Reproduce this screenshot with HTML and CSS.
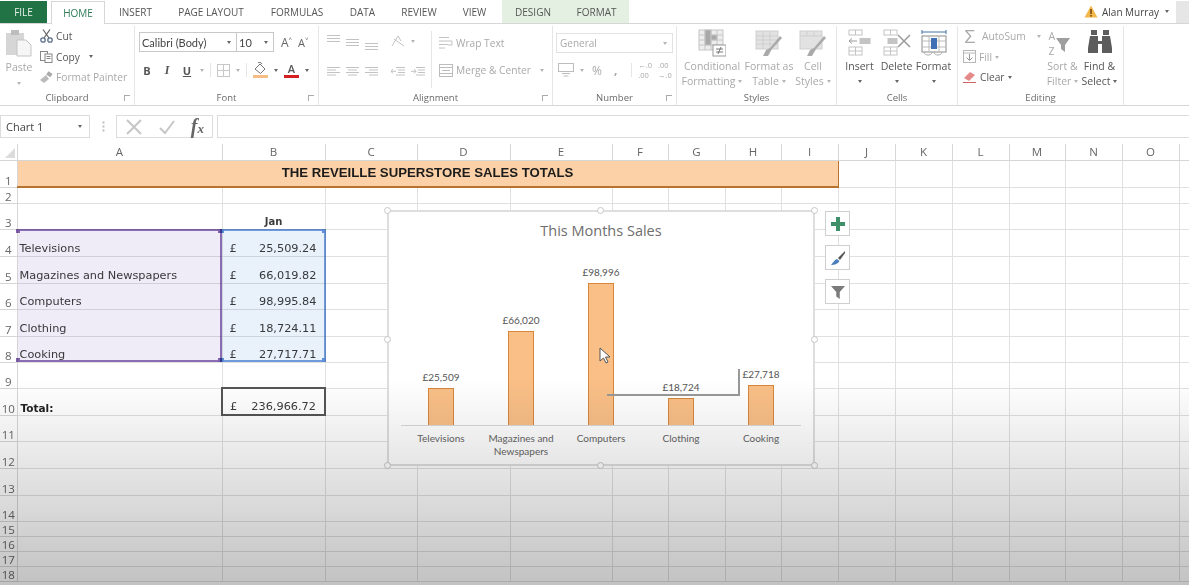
FILE: index.html
```html
<!DOCTYPE html>
<html lang="en">
<head>
    <meta charset="UTF-8">
    <title>Sales Totals - Excel</title>
    <link rel="stylesheet" href="styles.css">
</head>
<body>
<div class="app">
    <div class="tabs">
        <div class="tab file">FILE</div>
        <div class="tab home">HOME</div>
        <div class="tab w-insert">INSERT</div>
        <div class="tab w-layout">PAGE LAYOUT</div>
        <div class="tab w-formulas">FORMULAS</div>
        <div class="tab w-data">DATA</div>
        <div class="tab w-review">REVIEW</div>
        <div class="tab w-view">VIEW</div>
        <div class="chart-tabs">
            <div class="tab w-design">DESIGN</div>
            <div class="tab w-format">FORMAT</div>
        </div>
        <div class="user">
            <svg width="14" height="13" viewBox="0 0 14 13"><path d="M7 0.5 L13.5 12.5 H0.5 Z" fill="#f2b84b"/><rect x="6.2" y="4" width="1.6" height="5" fill="#7a4a10"/><rect x="6.2" y="10" width="1.6" height="1.6" fill="#7a4a10"/></svg>
            <span class="user-name">Alan Murray</span>
            <span class="caret dark"></span>
            <div class="avatar"></div>
        </div>
    </div>

    <div class="ribbon">
        <section class="group g-clipboard">
            <div class="group-body">
                <div class="big paste">
                    <svg width="28" height="28" viewBox="0 0 28 28"><rect x="1" y="4" width="18" height="22" fill="#d6d6d6"/><rect x="6" y="1" width="8" height="5" fill="#bdbdbd"/><path d="M12 11 H21 L26 16 V27 H12 Z" fill="#f6f6f6" stroke="#c4c4c4"/></svg>
                    <span class="off">Paste</span>
                    <span class="caret"></span>
                </div>
                <div class="stack">
                    <div class="small">
                        <svg width="13" height="14" viewBox="0 0 13 14" fill="none" stroke="#5a6f8c" stroke-width="1.3"><path d="M3 0.5 L9 9 M10 0.5 L4 9" stroke="#666"/><circle cx="3" cy="11" r="2.2"/><circle cx="10" cy="11" r="2.2"/></svg>
                        <span>Cut</span>
                    </div>
                    <div class="small">
                        <svg width="13" height="12" viewBox="0 0 13 12" fill="#fff" stroke="#888"><rect x="0.5" y="0.5" width="7" height="9"/><rect x="5" y="3" width="7" height="8.5"/><path d="M6.5 5.5 H10.5 M6.5 7.5 H10.5" /></svg>
                        <span>Copy</span>
                        <span class="caret dark gap"></span>
                    </div>
                    <div class="small off">
                        <svg width="13" height="12" viewBox="0 0 13 12"><path d="M0 9 L6 4 L9 8 L4 12 Z" fill="#bbb"/><rect x="7" y="1" width="5" height="4" transform="rotate(35 9 3)" fill="#aaa"/></svg>
                        <span>Format Painter</span>
                    </div>
                </div>
            </div>
            <div class="group-label">Clipboard<i class="launch"></i></div>
        </section>

        <section class="group g-font">
            <div class="group-body column">
                <div class="row">
                    <div class="combo font-name">Calibri (Body)<span class="caret dark"></span></div>
                    <div class="combo font-size">10<span class="caret dark"></span></div>
                    <span class="grow">A<sup>&#708;</sup></span>
                    <span class="shrink">A<sup>&#709;</sup></span>
                </div>
                <div class="row fmt">
                    <b class="fmt-b">B</b>
                    <i class="fmt-i">I</i>
                    <u class="fmt-u">U</u>
                    <span class="caret"></span>
                    <span class="tick"></span>
                    <svg width="13" height="13" viewBox="0 0 13 13" fill="none" stroke="#c8c8c8"><rect x="0.5" y="0.5" width="12" height="12"/><path d="M6.5 0 V13 M0 6.5 H13"/></svg>
                    <span class="caret"></span>
                    <span class="tick"></span>
                    <svg width="15" height="16" viewBox="0 0 15 16"><path d="M2 7 L7 2 L12 7 L7.500 11.500 Z" fill="#fff" stroke="#777"/><path d="M5 1 C6 0 8 0 9 2" fill="none" stroke="#777"/><rect x="0" y="13" width="15" height="3" fill="#f6bd85"/></svg>
                    <span class="caret dark"></span>
                    <span class="font-color">A</span>
                    <span class="caret dark"></span>
                </div>
            </div>
            <div class="group-label">Font<i class="launch"></i></div>
        </section>

        <section class="group g-align">
            <div class="group-body">
                <div class="column">
                    <div class="row align-icons top-icons">
                        <svg class="lines" width="13" height="8" viewBox="0 0 13 8"><path d="M0 .5H13M0 3.5H13M0 6.5H13"/></svg>
                        <svg class="lines lines-mid" width="13" height="8" viewBox="0 0 13 8"><path d="M0 .5H13M0 3.5H13M0 6.5H13"/></svg>
                        <svg class="lines lines-low" width="13" height="8" viewBox="0 0 13 8"><path d="M0 .5H13M0 3.5H13M0 6.5H13"/></svg>
                        <svg class="lines orient" width="14" height="12" viewBox="0 0 14 12"><path d="M1 11 L7 1 L10 6 M3 4 L13 11"/></svg>
                        <span class="caret orient-caret"></span>
                    </div>
                    <div class="row align-icons">
                        <svg class="lines" width="13" height="9" viewBox="0 0 13 9"><path d="M0 .5H13M0 3H9M0 5.5H13M0 8H9"/></svg>
                        <svg class="lines" width="13" height="9" viewBox="0 0 13 9"><path d="M0 .5H13M2 3H11M0 5.5H13M2 8H11"/></svg>
                        <svg class="lines" width="13" height="9" viewBox="0 0 13 9"><path d="M0 .5H13M4 3H13M0 5.5H13M4 8H13"/></svg>
                        <svg class="lines orient" width="14" height="9" viewBox="0 0 14 9"><path d="M5 .5H14M7 3H14M7 5.5H14M5 8H14M0 4.3H5M2 2L0 4.3L2 6.5"/></svg>
                        <svg class="lines" width="14" height="9" viewBox="0 0 14 9"><path d="M5 .5H14M7 3H14M7 5.5H14M5 8H14M0 4.3H5M3 2L5 4.3L3 6.5"/></svg>
                    </div>
                </div>
                <div class="stack wide">
                    <div class="small off">
                        <svg width="14" height="13" viewBox="0 0 14 13" class="lines"><path d="M0 .5H10M0 4H13M0 7.5H9M0 11H6M13 4V8H9"/></svg>
                        <span>Wrap Text</span>
                    </div>
                    <div class="small off">
                        <svg width="14" height="13" viewBox="0 0 14 13" fill="none" stroke="#bcbcbc"><rect x="0.5" y="0.5" width="13" height="12"/><path d="M0 3.5H14M0 9.5H14M3 6.5H11"/></svg>
                        <span>Merge &amp; Center</span>
                        <span class="caret merge-caret"></span>
                    </div>
                </div>
            </div>
            <div class="group-label">Alignment<i class="launch"></i></div>
        </section>

        <section class="group g-number">
            <div class="group-body column">
                <div class="row">
                    <div class="combo general off">General<span class="caret"></span></div>
                </div>
                <div class="row fmt-num">
                    <svg width="16" height="14" viewBox="0 0 16 14" fill="none" stroke="#bdbdbd"><rect x="0.5" y="0.5" width="15" height="8"/><path d="M4 10.5H12M5.5 13H10.5"/></svg>
                    <span class="caret"></span>
                    <span class="percent">%</span>
                    <span class="comma">,</span>
                    <span class="tick"></span>
                    <span class="decimals">&#8592;.0<br>.00</span>
                    <span class="decimals">.00<br>&#8594;.0</span>
                </div>
            </div>
            <div class="group-label">Number<i class="launch"></i></div>
        </section>

        <section class="group g-styles">
            <div class="group-body">
                <div class="big style off w-cond">
                    <svg width="28" height="28" viewBox="0 0 28 28" fill="none" stroke="#c6c6c6"><rect x="1" y="1" width="24" height="20" fill="#ededed"/><path d="M7 1V21M13 1V21M19 1V21M1 6H25M1 11H25M1 16H25"/><rect x="7" y="1" width="6" height="15" fill="#a8a8a8"/><rect x="13" y="6" width="6" height="5" fill="#a8a8a8"/><rect x="15" y="16" width="13" height="11" fill="#fff" stroke="#999"/><path d="M18 20H25M18 23H25M23 18L20 25" stroke="#777"/></svg>
                    <span>Conditional</span>
                    <span>Formatting<i class="caret inline"></i></span>
                </div>
                <div class="big style off w-table">
                    <svg width="28" height="28" viewBox="0 0 28 28" fill="none" stroke="#cfcfcf"><rect x="1" y="2" width="22" height="18" fill="#e2e2e2"/><path d="M1 7H23M1 11H23M1 15H23M8 2V20M15 2V20"/><path d="M27 9 L17 20 L13 27 L8 27 L11 21 L15 19 L25 7 Z" fill="#aaa" stroke="none"/></svg>
                    <span>Format as</span>
                    <span>Table<i class="caret inline"></i></span>
                </div>
                <div class="big style off w-cell">
                    <svg width="28" height="28" viewBox="0 0 28 28" fill="none" stroke="#cfcfcf"><rect x="1" y="2" width="22" height="18" fill="#e2e2e2"/><path d="M1 7H23M8 2V7M15 2V7"/><path d="M27 9 L17 20 L13 27 L8 27 L11 21 L15 19 L25 7 Z" fill="#aaa" stroke="none"/></svg>
                    <span>Cell</span>
                    <span>Styles<i class="caret inline"></i></span>
                </div>
            </div>
            <div class="group-label">Styles</div>
        </section>

        <section class="group g-cells">
            <div class="group-body">
                <div class="big cell-btn">
                    <svg width="24" height="28" viewBox="0 0 24 28" fill="none" stroke="#c4c4c4"><rect x="1" y="1" width="13" height="5"/><path d="M7.500 1V6"/><rect x="1" y="18" width="13" height="8"/><path d="M7.500 18V26M1 22H14"/><rect x="12" y="9.500" width="10" height="5" fill="#c4c4c4"/><path d="M1 12H9M4 9.500L1 12L4 14.500" stroke="#999"/></svg>
                    <span>Insert</span>
                    <span class="caret dark"></span>
                </div>
                <div class="big cell-btn">
                    <svg width="28" height="28" viewBox="0 0 28 28" fill="none" stroke="#c4c4c4"><rect x="1" y="1" width="13" height="5"/><path d="M7.500 1V6"/><rect x="1" y="18" width="13" height="8"/><path d="M7.500 18V26M1 22H14"/><rect x="5" y="9.500" width="9" height="5" fill="#c4c4c4"/><path d="M15 6L27 18M27 6L15 18" stroke="#9a9a9a" stroke-width="1.500"/></svg>
                    <span>Delete</span>
                    <span class="caret dark"></span>
                </div>
                <div class="big cell-btn">
                    <svg width="28" height="28" viewBox="0 0 28 28" fill="none" stroke="#8a8a8a"><path d="M2 3H26M2 1V5M26 1V5" stroke="#4472a8"/><rect x="2" y="7" width="24" height="16"/><path d="M9 7V23M19 7V23M2 12H26M2 18H26" stroke="#bbb"/><rect x="11" y="9" width="6" height="11" fill="#3f70b5" stroke="none"/><path d="M4 23 C4 27 12 27 12 23 M14 23 C14 27 22 27 22 23" stroke="#aaa"/></svg>
                    <span>Format</span>
                    <span class="caret dark"></span>
                </div>
            </div>
            <div class="group-label">Cells</div>
        </section>

        <section class="group g-editing">
            <div class="group-body">
                <div class="stack edit-stack">
                    <div class="small off">
                        <span class="sigma">&#931;</span>
                        <span>AutoSum</span>
                        <span class="caret gap-wide"></span>
                    </div>
                    <div class="small off">
                        <svg width="13" height="13" viewBox="0 0 13 13" fill="none" stroke="#b8b8b8"><rect x="0.500" y="0.500" width="12" height="12"/><path d="M0 3H13"/><path d="M6.500 4V10M3.500 7.500L6.500 10.500L9.500 7.500" stroke="#999"/></svg>
                        <span>Fill<i class="caret inline"></i></span>
                    </div>
                    <div class="small">
                        <svg width="14" height="12" viewBox="0 0 14 12"><path d="M1 7 L7 1 L12 4 L6 10 Z" fill="#e58a8a"/><path d="M0 11.500H13" stroke="#c66" stroke-width="1"/></svg>
                        <span>Clear<i class="caret inline dark"></i></span>
                    </div>
                </div>
                <div class="big edit-btn off">
                    <div class="sort-icon">
                        <div class="az"><span>A</span><span>Z</span></div>
                        <svg width="14" height="15" viewBox="0 0 14 15"><path d="M0 0H14L9 7V14L5 11V7Z" fill="#9e9e9e"/></svg>
                    </div>
                    <span>Sort &amp;</span>
                    <span>Filter<i class="caret inline"></i></span>
                </div>
                <div class="big edit-btn">
                    <svg width="26" height="28" viewBox="0 0 26 28" fill="#5d5d5d"><rect x="4" y="1" width="6" height="5"/><rect x="16" y="1" width="6" height="5"/><path d="M3 7H11V12H15V7H23L25 19V24H15V15H11V24H1V19Z"/></svg>
                    <span>Find &amp;</span>
                    <span>Select<i class="caret inline dark"></i></span>
                </div>
            </div>
            <div class="group-label">Editing</div>
        </section>
    </div>

    <div class="formula-bar">
        <div class="name-box">Chart 1<span class="caret dark"></span></div>
        <div class="grip"></div>
        <div class="fx-buttons">
            <svg width="18" height="18" viewBox="0 0 18 18" fill="none" stroke="#c6c6c6" stroke-width="2"><path d="M2 2L16 16M16 2L2 16"/></svg>
            <svg width="18" height="18" viewBox="0 0 18 18" fill="none" stroke="#c6c6c6" stroke-width="2"><path d="M2 10L7 15L16 3"/></svg>
            <span class="fx">f<small>x</small></span>
        </div>
        <div class="formula-input"></div>
    </div>

    <div class="sheet">
        <table class="grid">
            <colgroup>
                <col class="c-head"><col class="c-a"><col class="c-b"><col class="c-c"><col class="c-d"><col class="c-e">
                <col class="c-f"><col class="c-g"><col class="c-f"><col class="c-g"><col class="c-g"><col class="c-g">
                <col class="c-g"><col class="c-f"><col class="c-g"><col class="c-g"><col class="c-p">
            </colgroup>
            <thead>
                <tr class="h17"><th class="corner"><span></span></th><th>A</th><th>B</th><th>C</th><th>D</th><th>E</th><th>F</th><th>G</th><th>H</th><th>I</th><th>J</th><th>K</th><th>L</th><th>M</th><th>N</th><th>O</th><th></th></tr>
            </thead>
            <tbody>
                <tr class="h27"><th>1</th><td colspan="9" class="banner">THE REVEILLE SUPERSTORE SALES TOTALS</td><td></td><td></td><td></td><td></td><td></td><td></td><td></td></tr>
                <tr class="h16"><th>2</th><td></td><td></td><td></td><td></td><td></td><td></td><td></td><td></td><td></td><td></td><td></td><td></td><td></td><td></td><td></td><td></td></tr>
                <tr class="h26"><th>3</th><td></td><td class="month">Jan</td><td></td><td></td><td></td><td></td><td></td><td></td><td></td><td></td><td></td><td></td><td></td><td></td><td></td><td></td></tr>
                <tr class="h27"><th>4</th><td class="label">Televisions</td><td class="num"><div><span>£</span><span>25,509.24</span></div></td><td></td><td></td><td></td><td></td><td></td><td></td><td></td><td></td><td></td><td></td><td></td><td></td><td></td><td></td></tr>
                <tr class="h27"><th>5</th><td class="label">Magazines and Newspapers</td><td class="num"><div><span>£</span><span>66,019.82</span></div></td><td></td><td></td><td></td><td></td><td></td><td></td><td></td><td></td><td></td><td></td><td></td><td></td><td></td><td></td></tr>
                <tr class="h26"><th>6</th><td class="label">Computers</td><td class="num"><div><span>£</span><span>98,995.84</span></div></td><td></td><td></td><td></td><td></td><td></td><td></td><td></td><td></td><td></td><td></td><td></td><td></td><td></td><td></td></tr>
                <tr class="h27"><th>7</th><td class="label">Clothing</td><td class="num"><div><span>£</span><span>18,724.11</span></div></td><td></td><td></td><td></td><td></td><td></td><td></td><td></td><td></td><td></td><td></td><td></td><td></td><td></td><td></td></tr>
                <tr class="h26"><th>8</th><td class="label">Cooking</td><td class="num"><div><span>£</span><span>27,717.71</span></div></td><td></td><td></td><td></td><td></td><td></td><td></td><td></td><td></td><td></td><td></td><td></td><td></td><td></td><td></td></tr>
                <tr class="h26"><th>9</th><td></td><td></td><td></td><td></td><td></td><td></td><td></td><td></td><td></td><td></td><td></td><td></td><td></td><td></td><td></td><td></td></tr>
                <tr class="h27"><th>10</th><td class="label total">Total:</td><td class="num total-box"><div><span>£</span><span>236,966.72</span></div></td><td></td><td></td><td></td><td></td><td></td><td></td><td></td><td></td><td></td><td></td><td></td><td></td><td></td><td></td></tr>
                <tr class="h26"><th>11</th><td></td><td></td><td></td><td></td><td></td><td></td><td></td><td></td><td></td><td></td><td></td><td></td><td></td><td></td><td></td><td></td></tr>
                <tr class="h27"><th>12</th><td></td><td></td><td></td><td></td><td></td><td></td><td></td><td></td><td></td><td></td><td></td><td></td><td></td><td></td><td></td><td></td></tr>
                <tr class="h27"><th>13</th><td></td><td></td><td></td><td></td><td></td><td></td><td></td><td></td><td></td><td></td><td></td><td></td><td></td><td></td><td></td><td></td></tr>
                <tr class="h26"><th>14</th><td></td><td></td><td></td><td></td><td></td><td></td><td></td><td></td><td></td><td></td><td></td><td></td><td></td><td></td><td></td><td></td></tr>
                <tr class="h15"><th>15</th><td></td><td></td><td></td><td></td><td></td><td></td><td></td><td></td><td></td><td></td><td></td><td></td><td></td><td></td><td></td><td></td></tr>
                <tr class="h15"><th>16</th><td></td><td></td><td></td><td></td><td></td><td></td><td></td><td></td><td></td><td></td><td></td><td></td><td></td><td></td><td></td><td></td></tr>
                <tr class="h15"><th>17</th><td></td><td></td><td></td><td></td><td></td><td></td><td></td><td></td><td></td><td></td><td></td><td></td><td></td><td></td><td></td><td></td></tr>
                <tr class="h15"><th>18</th><td></td><td></td><td></td><td></td><td></td><td></td><td></td><td></td><td></td><td></td><td></td><td></td><td></td><td></td><td></td><td></td></tr>
            </tbody>
        </table>

        <!-- ranges highlighted by the selected chart -->
        <div class="range range-names"><i class="tl"></i><i class="tr"></i><i class="bl"></i><i class="br"></i></div>
        <div class="range range-values"><i class="tl"></i><i class="tr"></i><i class="bl"></i><i class="br"></i></div>

        <div class="chart">
            <i class="handle h-tl"></i><i class="handle h-tc"></i><i class="handle h-tr"></i>
            <i class="handle h-ml"></i><i class="handle h-mr"></i>
            <i class="handle h-bl"></i><i class="handle h-bc"></i><i class="handle h-br"></i>
            <div class="chart-title">This Months Sales</div>
            <div class="plot">
                <div class="bar-col"><span>£25,509</span><div class="bar" style="height:37px"></div></div>
                <div class="bar-col"><span>£66,020</span><div class="bar" style="height:94px"></div></div>
                <div class="bar-col"><span>£98,996</span><div class="bar" style="height:142px"></div></div>
                <div class="bar-col"><span>£18,724</span><div class="bar" style="height:27px"></div></div>
                <div class="bar-col"><span>£27,718</span><div class="bar" style="height:40px"></div></div>
            </div>
            <div class="cats">
                <div>Televisions</div>
                <div>Magazines and Newspapers</div>
                <div>Computers</div>
                <div>Clothing</div>
                <div>Cooking</div>
            </div>
            <div class="leader"></div>
            <svg class="pointer" width="12" height="17" viewBox="0 0 12 17"><path d="M1 1V14L4.500 11L7 16L9 15L6.500 10H11Z" fill="#fff" stroke="#555"/></svg>
        </div>

        <div class="chart-tools">
            <div class="tool"><svg width="14" height="14" viewBox="0 0 14 14"><path d="M5 0H9V5H14V9H9V14H5V9H0V5H5Z" fill="#3f8f6b"/></svg></div>
            <div class="tool"><svg width="16" height="16" viewBox="0 0 16 16"><path d="M15 1L8 8L10 10L15 3Z" fill="#555"/><path d="M7 9L9.500 11C8 14 4 15 1 15C3 13 4 10 7 9Z" fill="#4a7ebb"/></svg></div>
            <div class="tool"><svg width="14" height="14" viewBox="0 0 16 16"><path d="M0 1H16L10 8V16L6 13V8Z" fill="#7b7b7b"/></svg></div>
        </div>

        <div class="shade"></div>
    </div>
</div>
</body>
</html>
```

FILE: styles.css
```css
html, body {
    margin: 0;
    padding: 0;
    height: 100%;
    overflow: hidden;
    background: #fff;
}
.app {
    width: 1189px;
    height: 585px;
    overflow: hidden;
    font-family: "Open Sans", sans-serif;
    font-size: 10.2px;
    color: #555;
}
svg {
    flex-shrink: 0;
}

/* tabs */
.tabs {
    display: flex;
    align-items: stretch;
    height: 23px;
    border-bottom: 1px solid #d6d6d6;
    box-sizing: content-box;
}
.tab {
    display: flex;
    align-items: center;
    justify-content: center;
    font-size: 10px;
    color: #555;
}
.tab.file {
    width: 47px;
    margin-top: 1px;
    background: #217346;
    color: #e8f2ec;
}
.tab.home {
    width: 54px;
    margin-left: 4px;
    margin-top: 1px;
    margin-bottom: -1px;
    background: #fff;
    border: 1px solid #d6d6d6;
    border-bottom: none;
    color: #2c7a55;
    box-sizing: border-box;
}
.w-insert { width: 61px; }
.w-layout { width: 90px; }
.w-formulas { width: 82px; }
.w-data { width: 49px; }
.w-review { width: 64px; }
.w-view { width: 51px; padding-right: 4px; box-sizing: border-box; }
.chart-tabs {
    display: flex;
    background: #e4f0e2;
}
.w-design { width: 62px; }
.w-format { width: 65px; }
.user {
    display: flex;
    align-items: center;
    margin-left: auto;
    font-size: 10px;
}
.user-name {
    margin-left: 4px;
    margin-right: 6px;
    color: #444;
}
.avatar {
    width: 13px;
    height: 22px;
    margin-left: 7px;
    background: #e6e6e6;
}
.caret {
    display: inline-block;
    flex-shrink: 0;
    width: 0;
    height: 0;
    border-left: 2.5px solid transparent;
    border-right: 2.5px solid transparent;
    border-top: 3px solid #b5b5b5;
}
.caret.dark {
    border-top-color: #666;
}
.caret.inline {
    margin-left: 3px;
    vertical-align: 2px;
}

/* ribbon */
.ribbon {
    display: flex;
    height: 81px;
    border-bottom: 1px solid #d6d6d6;
}
.group {
    display: flex;
    flex-direction: column;
    box-sizing: border-box;
    border-right: 1px solid #e6e6e6;
    margin: 2px 0 0;
}
.group-body {
    display: flex;
    flex: 1;
    min-height: 0;
}
.group-body.column, .column {
    display: flex;
    flex-direction: column;
}
.group-label {
    position: relative;
    height: 14px;
    line-height: 14px;
    text-align: center;
    font-size: 9.5px;
    color: #6a6a6a;
}
.launch {
    position: absolute;
    right: 4px;
    top: 4px;
    width: 5px;
    height: 5px;
    border-left: 1px solid #aaa;
    border-top: 1px solid #aaa;
}
.g-clipboard { width: 135px; }
.g-font { width: 184px; }
.g-align { width: 234px; }
.g-number { width: 124px; }
.g-styles { width: 160px; }
.g-cells { width: 121px; }
.g-editing { width: 166px; }

.big {
    display: flex;
    flex-direction: column;
    align-items: center;
    padding-top: 3px;
    line-height: 15px;
    white-space: nowrap;
    font-size: 10.5px;
    color: #555;
}
.off, .off span {
    color: #a9a9a9;
}
.paste {
    width: 38px;
    padding-left: 0;
}
.paste span.off {
    margin-top: 3px;
}
.paste .caret {
    margin-top: 7px;
}
.stack {
    display: flex;
    flex-direction: column;
    padding-top: 1px;
    gap: 2.5px;
    margin-left: 2px;
}
.small {
    display: flex;
    align-items: center;
    gap: 3px;
    height: 18px;
    white-space: nowrap;
}
.small.off span { color: #a9a9a9; }
.gap { margin-left: 6px; }

.row {
    display: flex;
    align-items: center;
}
.combo {
    display: flex;
    align-items: center;
    justify-content: space-between;
    height: 20px;
    box-sizing: border-box;
    border: 1px solid #c8c8c8;
    padding: 0 5px 0 2px;
    font-family: "Lato", sans-serif;
    font-size: 11px;
    color: #444;
}
.g-font .row:first-child {
    margin-top: 6px;
    padding-left: 4px;
}
.font-name { width: 98px; }
.font-size { width: 38px; margin-left: -1px; }
.grow, .shrink {
    font-size: 12px;
    color: #666;
}
.grow { margin-left: 7px; }
.shrink { margin-left: 6px; font-size: 11px; }
.grow sup, .shrink sup {
    font-size: 6px;
    vertical-align: 6px;
    line-height: 0;
}
.fmt {
    margin-top: 8px;
    padding-left: 5px;
    gap: 6px;
    height: 20px;
}
.fmt b, .fmt i, .fmt u {
    width: 14px;
    font-family: "Liberation Serif", serif;
    font-size: 12px;
    font-weight: 700;
    color: #555;
    text-align: center;
}
.fmt b { font-family: "Open Sans", sans-serif; font-size: 11px; }
.fmt u { font-family: "Open Sans", sans-serif; font-size: 11px; }
.tick {
    width: 1px;
    height: 14px;
    background: #e6e6e6;
}
.font-color {
    width: 15px;
    border-bottom: 3px solid #d42020;
    font-size: 11px;
    font-weight: 600;
    line-height: 12px;
    text-align: center;
    color: #555;
}

.lines {
    fill: none;
    stroke: #c2c2c2;
    stroke-width: 1;
}
.g-align .column {
    width: 116px;
    padding: 6px 0 0 8px;
    box-sizing: border-box;
}
.align-icons {
    gap: 6px;
    height: 20px;
}
.top-icons {
    align-items: flex-start;
    padding-top: 3px;
    height: 17px;
}
.align-icons + .align-icons {
    margin-top: 9px;
}
.lines-mid { margin-top: 4px; }
.lines-low { margin-top: 8px; }
.orient { margin-left: 7px; }
.orient-caret { margin-top: 5px; }
.stack.wide {
    border-left: 1px solid #e6e6e6;
    height: 54px;
    margin: 5px 0 0 -4px;
    padding: 3px 0 0 7px;
    gap: 9px;
}
.merge-caret { margin-left: 6px; }

.general {
    width: 117px;
    margin: 7px 0 0 3px;
    border-color: #e2e2e2;
    color: #a9a9a9;
    font-family: "Open Sans", sans-serif;
    font-size: 10px;
    padding-left: 3px;
}
.fmt-num {
    margin-top: 7px;
    height: 20px;
    padding-left: 5px;
    gap: 6px;
    color: #a9a9a9;
}
.percent { margin-left: 2px; font-size: 12px; }
.comma { margin: 0 8px 0 6px; font-weight: 700; font-size: 12px; line-height: 8px; }
.decimals {
    font-size: 7.5px;
    line-height: 10px;
    white-space: nowrap;
}

.style svg { margin-bottom: 2px; }
.w-cond { width: 70px; }
.w-table { width: 44px; }
.w-cell { width: 44px; }
.cell-btn svg { margin-bottom: 2px; }
.cell-btn .caret { margin-top: 6px; }
.g-cells .group-body { padding-left: 4px; }
.cell-btn { width: 37px; }
.sigma {
    width: 14px;
    margin-right: 2px;
    font-size: 19px;
    line-height: 18px;
    text-align: center;
}
.edit-stack {
    width: 81px;
    margin-left: 5px;
}
.gap-wide { margin-left: 8px; }
.edit-btn { width: 37px; }
.edit-btn svg { margin-bottom: 2px; }
.sort-icon {
    display: flex;
    width: 28px;
    height: 30px;
    gap: 1px;
}
.sort-icon svg {
    margin: 9px 0 0;
}
.az {
    display: flex;
    flex-direction: column;
    font-size: 10.5px;
    line-height: 15px;
    color: #b5b5b5;
}

/* formula bar */
.formula-bar {
    display: flex;
    align-items: stretch;
    height: 23px;
    margin-top: 9px;
}
.name-box {
    display: flex;
    align-items: center;
    justify-content: space-between;
    width: 90px;
    box-sizing: border-box;
    border: 1px solid #dcdcdc;
    padding: 0 7px 0 5px;
    font-size: 11px;
    color: #444;
}
.grip {
    width: 26px;
    background: radial-gradient(circle, #bbb 1px, transparent 1.2px) center / 3px 4px repeat-y;
    background-clip: content-box;
    padding: 6px 0;
    box-sizing: border-box;
}
.fx-buttons {
    display: flex;
    align-items: center;
    justify-content: space-between;
    width: 97px;
    box-sizing: border-box;
    border: 1px solid #dcdcdc;
    padding: 0 8px;
}
.fx {
    font-family: "Liberation Serif", serif;
    font-style: italic;
    font-weight: 700;
    font-size: 20px;
    color: #666;
}
.fx small { font-size: 13px; }
.formula-input {
    flex: 1;
    margin-left: 4px;
    border-top: 1px solid #dcdcdc;
    border-bottom: 1px solid #dcdcdc;
    border-left: 1px solid #dcdcdc;
}

/* sheet */
.sheet {
    position: relative;
    width: 1189px;
    height: 441px;
    margin-top: 6px;
    overflow: hidden;
}
.grid {
    table-layout: fixed;
    width: 1189px;
    border-collapse: collapse;
    font-family: "DejaVu Sans", sans-serif;
    font-size: 11.3px;
    color: #3c3c3c;
}
.c-head { width: 17px; }
.c-a { width: 205px; }
.c-b { width: 103px; }
.c-c { width: 92px; }
.c-d { width: 93px; }
.c-e { width: 102px; }
.c-f { width: 56px; }
.c-g { width: 57px; }
.c-p { width: 10px; }
.h15 { height: 15px; }
.h16 { height: 16px; }
.h17 { height: 16px; }
.h26 { height: 26px; }
.h27 { height: 27px; }
.grid th {
    padding: 0;
    box-sizing: border-box;
    font-family: "Open Sans", sans-serif;
    font-size: 11.5px;
    font-weight: 400;
    color: #666;
    border-right: 1px solid #d6d6d6;
    border-bottom: 1px solid #d6d6d6;
}
.grid tbody th {
    vertical-align: bottom;
    line-height: 13px;
    text-align: center;
    overflow: visible;
    white-space: nowrap;
}
.corner {
    position: relative;
}
.corner span {
    position: absolute;
    right: 2px;
    bottom: 2px;
    border-left: 10px solid transparent;
    border-bottom: 10px solid #dcdcdc;
}
.grid td {
    padding: 0;
    box-sizing: border-box;
    border-right: 1px solid #e0e0e0;
    border-bottom: 1px solid #e0e0e0;
    vertical-align: bottom;
    line-height: 14px;
    white-space: nowrap;
}
.grid td.banner {
    background: #fcd1a7;
    border-top: 1px solid #d59a62;
    border-bottom: 2px solid #b8742f;
    border-right: 1px solid #b8742f;
    vertical-align: middle;
    text-align: center;
    font-family: "Liberation Sans", sans-serif;
    font-size: 13.2px;
    font-weight: 700;
    color: #1c1c1c;
}
.month {
    text-align: center;
    font-weight: 700;
    font-size: 10px;
}
.label { padding-left: 2px !important; }
.total {
    font-weight: 700;
    font-size: 10.5px;
    padding-left: 3px !important;
    color: #222;
}
.num div {
    display: flex;
    justify-content: space-between;
    padding: 0 8px 0 7px;
}
.grid td.total-box {
    border: 2px solid #555;
}

.range {
    position: absolute;
    top: 85px;
    height: 133px;
    box-sizing: border-box;
    mix-blend-mode: multiply;
}
.range i {
    position: absolute;
    width: 4px;
    height: 4px;
}
.range .tl { left: -2px; top: -2px; }
.range .tr { right: -2px; top: -2px; }
.range .bl { left: -2px; bottom: -2px; }
.range .br { right: -2px; bottom: -2px; }
.range-names {
    left: 18px;
    width: 204px;
    background: #f0ecf7;
    border: 2px solid #8a6cb4;
    border-left: none;
}
.range-names i { background: #7f62ab; }
.range-values {
    left: 222px;
    width: 104px;
    background: #e9f1fb;
    border: 2px solid #6f9bdc;
    border-left: none;
}
.range-values i { background: #5f8fd8; }

/* chart */
.chart {
    position: absolute;
    left: 387px;
    top: 66px;
    width: 428px;
    height: 256px;
    box-sizing: border-box;
    display: flex;
    flex-direction: column;
    padding: 0 12px;
    background: #fff;
    border: 2px solid #dedede;
    font-family: "Lato", sans-serif;
    color: #666;
}
.chart-title {
    flex-shrink: 0;
    height: 40px;
    line-height: 37px;
    text-align: center;
    font-family: "Open Sans", sans-serif;
    font-size: 14.5px;
    color: #6e6e6e;
}
.plot {
    display: flex;
    flex-shrink: 0;
    align-items: flex-end;
    height: 173px;
    border-bottom: 1px solid #d9d9d9;
}
.bar-col {
    display: flex;
    flex: 1;
    flex-direction: column;
    align-items: center;
    font-size: 10px;
    color: #555;
}
.bar-col span {
    margin-bottom: 5px;
    line-height: 12px;
}
.bar {
    width: 26px;
    box-sizing: border-box;
    background: #f9bf87;
    border: 1px solid #d5883c;
    border-bottom: none;
}
.cats {
    display: flex;
    margin-top: 6px;
    font-size: 10px;
    line-height: 13px;
    text-align: center;
    color: #666;
}
.cats div {
    flex: 1;
    padding: 0 5px;
}
.handle {
    position: absolute;
    width: 7px;
    height: 7px;
    box-sizing: border-box;
    border: 1px solid #c6c6c6;
    border-radius: 50%;
    background: #fff;
}
.h-tl { left: -5px; top: -5px; }
.h-tc { left: 208px; top: -5px; }
.h-tr { right: -5px; top: -5px; }
.h-ml { left: -5px; top: 124px; }
.h-mr { right: -5px; top: 124px; }
.h-bl { left: -5px; bottom: -5px; }
.h-bc { left: 208px; bottom: -5px; }
.h-br { right: -5px; bottom: -5px; }
.leader {
    position: absolute;
    left: 218px;
    top: 157px;
    width: 131px;
    height: 25px;
    border-right: 2px solid #999;
    border-bottom: 2px solid #999;
}
.pointer {
    position: absolute;
    left: 210px;
    top: 135px;
}
.chart-tools {
    position: absolute;
    left: 825px;
    top: 67px;
    display: flex;
    flex-direction: column;
    gap: 9px;
}
.tool {
    display: flex;
    align-items: center;
    justify-content: center;
    width: 25px;
    height: 25px;
    box-sizing: border-box;
    background: #fff;
    border: 1px solid #cfcfcf;
}

/* darkening at the foot of the video frame */
.shade {
    position: absolute;
    left: 0;
    right: 0;
    top: 236px;
    bottom: 0;
    background: linear-gradient(rgba(0, 0, 0, 0), rgba(0, 0, 0, 0.24));
    pointer-events: none;
}
```
